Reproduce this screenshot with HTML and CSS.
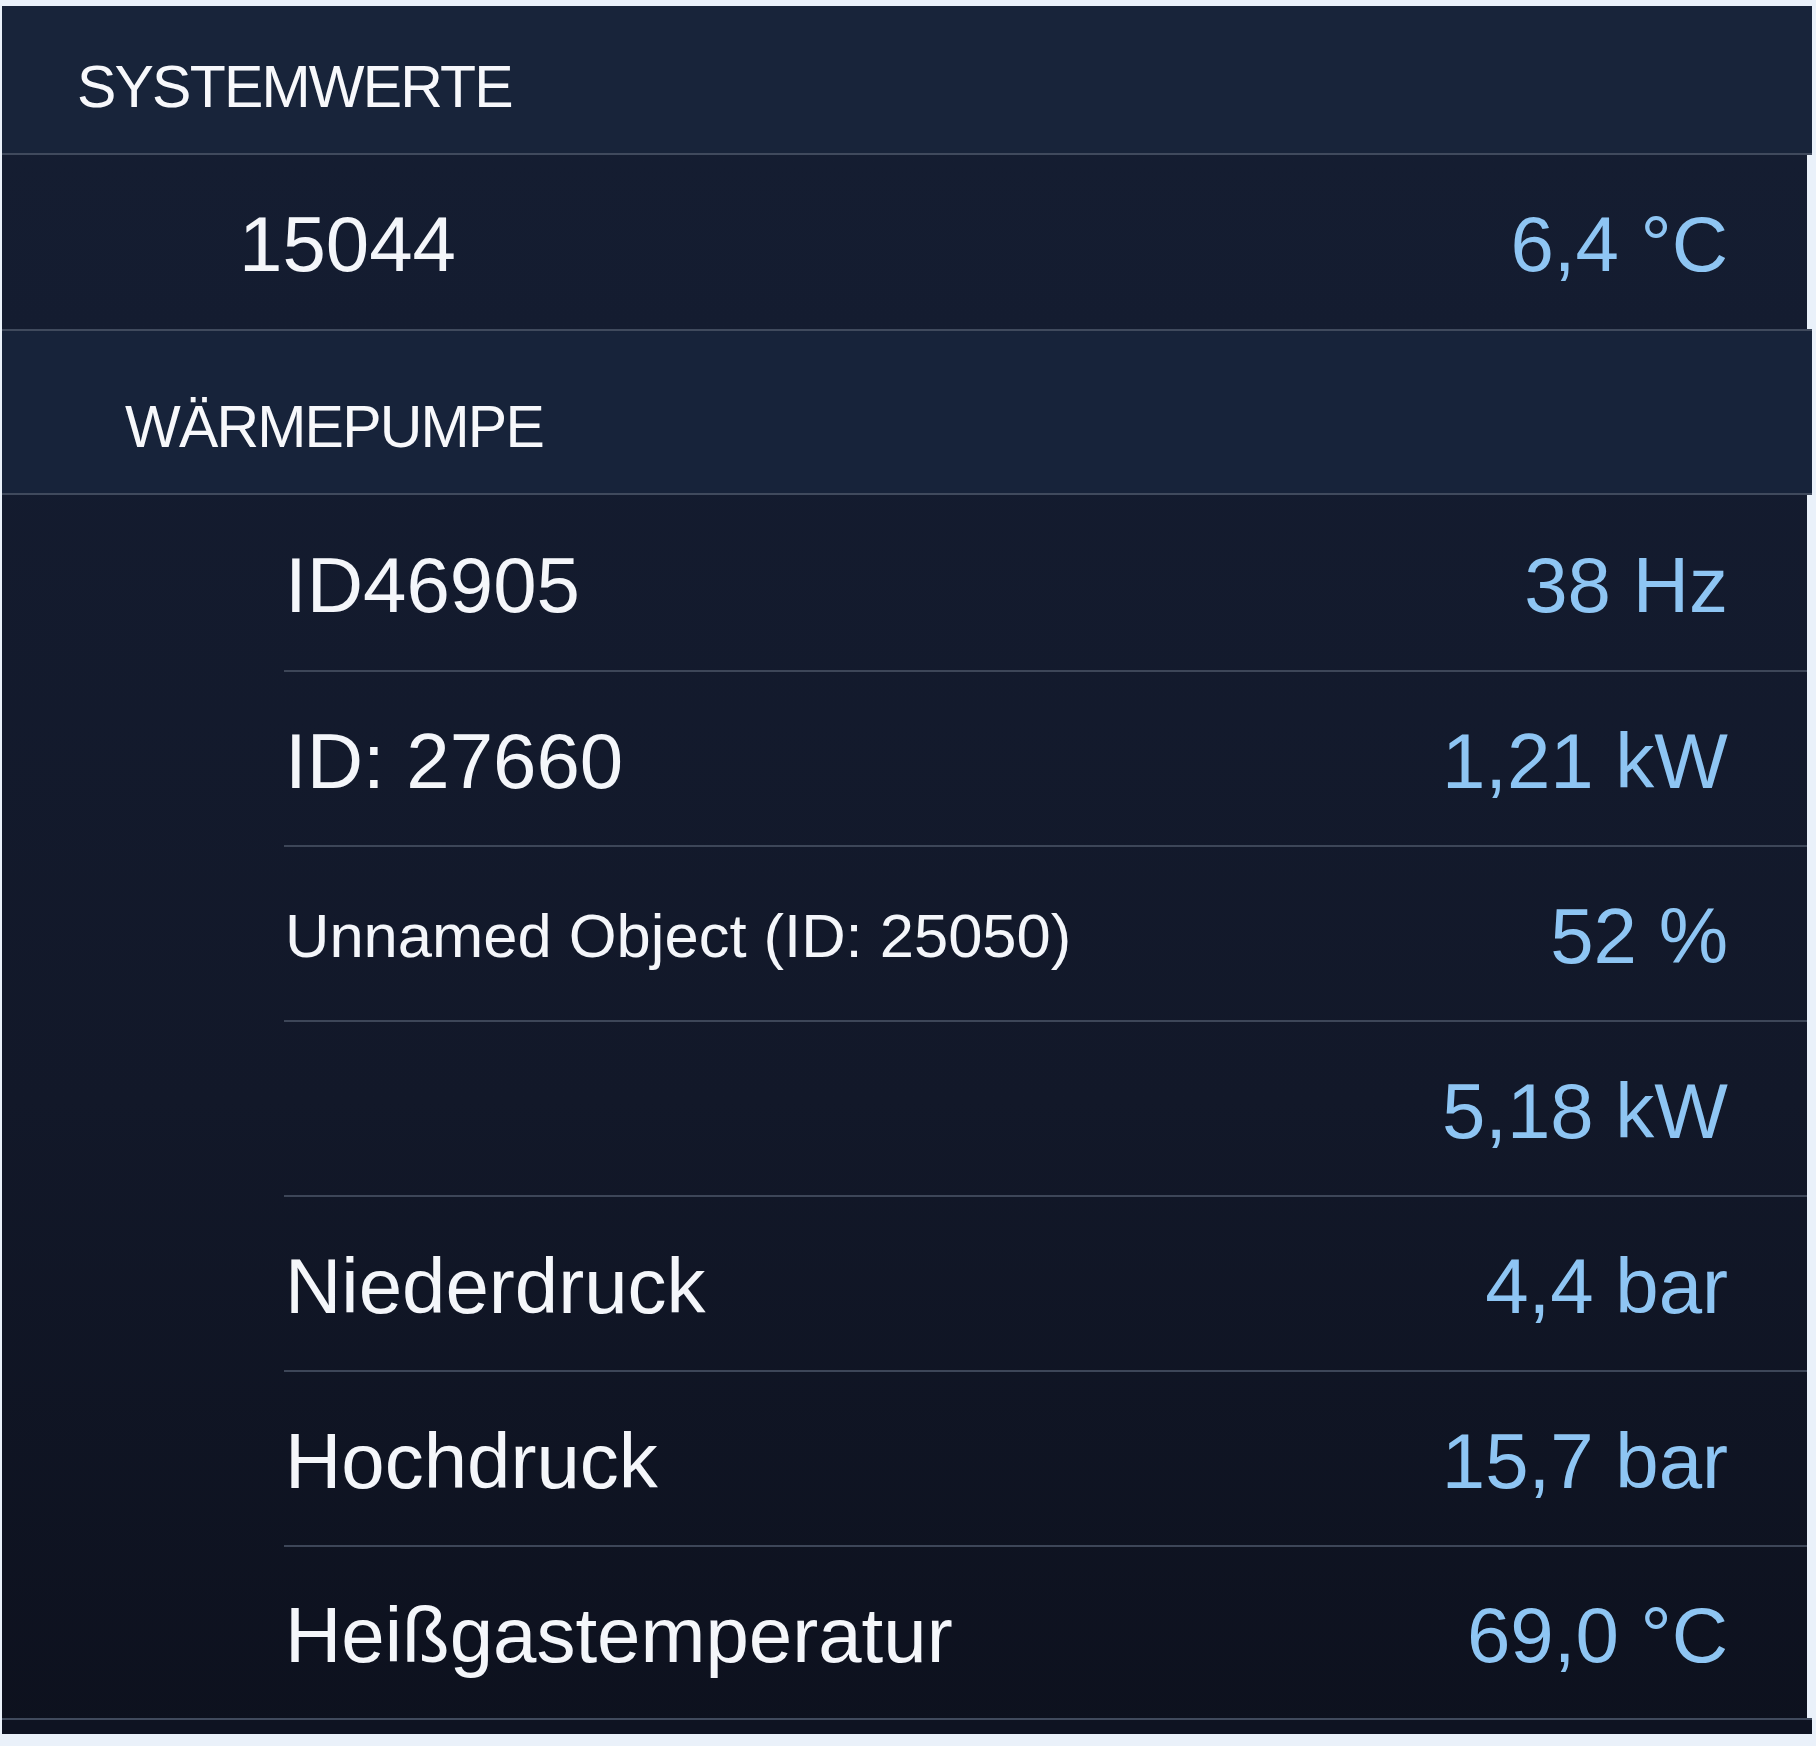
FILE: index.html
```html
<!DOCTYPE html>
<html lang="de">
<head>
<meta charset="utf-8">
<title>Systemwerte</title>
<link rel="stylesheet" href="styles.css">
</head>
<body>
<div class="panel">
  <div class="hdr hdr-top"><span class="hdr-title">SYSTEMWERTE</span></div>
  <div class="row row-sys">
    <span class="label">15044</span>
    <span class="value">6,4 °C</span>
  </div>
  <div class="hdr hdr-sub"><span class="hdr-title">WÄRMEPUMPE</span></div>
  <div class="group">
    <div class="row row-item"><div class="row-inner"><span class="label">ID46905</span><span class="value">38 Hz</span></div></div>
    <div class="row row-item"><div class="row-inner"><span class="label">ID: 27660</span><span class="value">1,21 kW</span></div></div>
    <div class="row row-item"><div class="row-inner"><span class="label small">Unnamed Object (ID: 25050)</span><span class="value">52 %</span></div></div>
    <div class="row row-item"><div class="row-inner"><span class="label"></span><span class="value">5,18 kW</span></div></div>
    <div class="row row-item"><div class="row-inner"><span class="label">Niederdruck</span><span class="value">4,4 bar</span></div></div>
    <div class="row row-item"><div class="row-inner"><span class="label">Hochdruck</span><span class="value">15,7 bar</span></div></div>
    <div class="row row-item"><div class="row-inner"><span class="label">Heißgastemperatur</span><span class="value">69,0 °C</span></div></div>
  </div>
  <div class="foot"></div>
</div>
</body>
</html>
```
FILE: styles.css
```css
* { box-sizing: border-box; }

html, body {
  margin: 0;
  padding: 0;
}

body {
  background: #eaf1fa;
  font-family: "Liberation Sans", Arial, "Helvetica Neue", sans-serif;
  color: #f4f6fa;
  height: 1746px;
  overflow: hidden;
}

.panel {
  margin: 6px 0 0 2px;
  width: 1810px;
  display: flex;
  flex-direction: column;
}

.hdr {
  display: flex;
  align-items: flex-end;
}

.hdr-title {
  font-size: 59px;
  line-height: 1;
  letter-spacing: -1.8px;
  color: #f7f8fb;
}

.hdr-top {
  height: 149px;
  background: #18243a;
  border-bottom: 2px solid #404a5d;
  padding: 0 0 36px 75px;
}

.hdr-sub {
  height: 166px;
  background: #17233a;
  border-top: 2px solid #404a5d;
  border-bottom: 2px solid #404a5d;
  padding: 0 0 36px 123px;
}

.row {
  margin-right: 5px;
  background: linear-gradient(180deg, #151e32 0px, #141c30 330px, #121829 1100px, #0d111e 1746px);
  background-attachment: fixed;
  display: flex;
}

.row-sys {
  height: 174px;
  align-items: center;
  justify-content: space-between;
  padding: 4px 79px 0 237px;
}

.row-item {
  height: 175px;
  padding-left: 282px;
}

.row-item:last-child {
  height: 173px;
}

.row-inner {
  flex: 1;
  display: flex;
  align-items: center;
  justify-content: space-between;
  padding: 5px 79px 0 1px;
  border-top: 2px solid #3d4658;
}

.row-item:first-child .row-inner {
  border-top: none;
}

.label {
  font-size: 78px;
  line-height: 1;
  color: #f4f6fa;
  white-space: nowrap;
}

.label.small {
  font-size: 61.5px;
}

.value {
  font-size: 78px;
  line-height: 1;
  color: #8ec5f3;
  white-space: nowrap;
}

.foot {
  height: 16px;
  background: #0e1322;
  border-top: 2px solid #404a5d;
}
```
